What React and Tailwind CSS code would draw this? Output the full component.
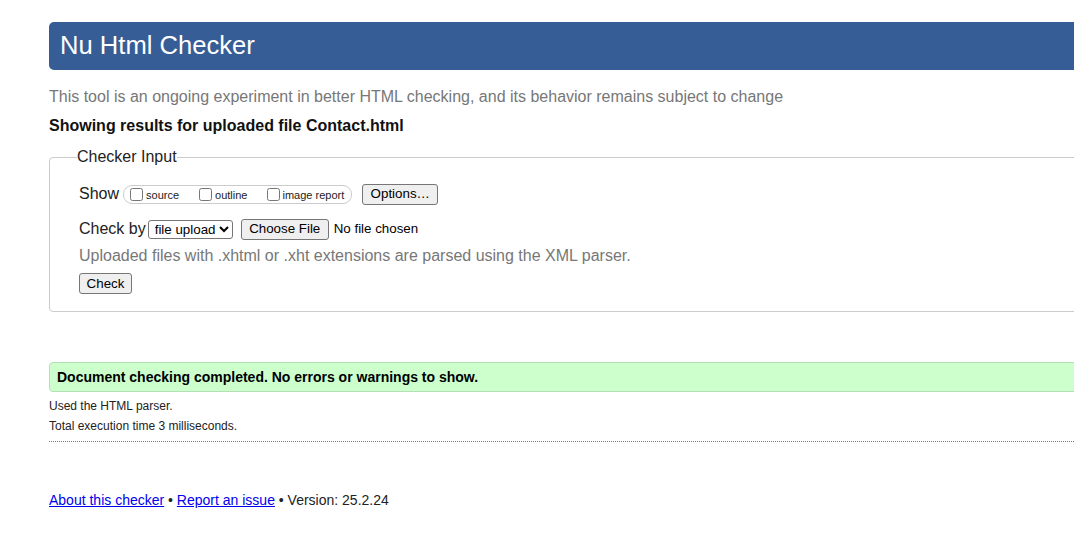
import { useState } from 'react'

function Btn({ children, className = '' }) {
  return (
    <button className={`h-[21px] px-[6px] bg-[#efefef] border border-[#767676] rounded-[3px] text-[13.33px] leading-none text-black ${className}`}>
      {children}
    </button>
  )
}

function Box({ label, last }) {
  const [on, setOn] = useState(false)
  return (
    <label className={`flex items-center ${last ? '' : 'mr-[20px]'}`}>
      <input type="checkbox" checked={on} onChange={() => setOn(!on)} className="m-0 w-[13px] h-[13px]" />
      <span className={`${last ? 'ml-[2px]' : 'ml-[3px]'} text-[11px] leading-none mt-[2px]`}>{label}</span>
    </label>
  )
}

export default function App() {
  return (
    <div className="w-full overflow-hidden bg-white font-['Liberation_Sans',Arial,sans-serif] text-[#222]">
      <div className="pt-[22px] pl-[49px] w-[1140px] pb-[40px]">
        {/* header */}
        <div className="h-[48px] bg-[#365d95] rounded-[5px] flex items-center pl-[11px]">
          <h1 className="text-white text-[25.6px] leading-none">Nu Html Checker</h1>
        </div>

        <p className="mt-[17px] h-[20px] leading-[20px] text-[16px] text-[#777]">
          This tool is an ongoing experiment in better HTML checking, and its behavior remains subject to change
        </p>
        <p className="mt-[9px] h-[20px] leading-[20px] text-[16px] font-bold text-[#111]">
          Showing results for uploaded file Contact.html
        </p>

        {/* checker input */}
        <fieldset className="mt-[12px] border border-[#ccc] rounded-[4px] pl-[27px] pb-[17px]">
          <legend className="px-0 text-[16px] leading-[18px] text-[#222]">Checker Input</legend>

          <div className="mt-[17px] h-[22px] flex items-center pl-[2px]">
            <span className="text-[16px]">Show</span>
            <span className="ml-[4px] h-[19px] flex items-center border border-[#ccc] rounded-[9px] pl-[6px] pr-[7px]">
              <Box label="source" />
              <Box label="outline" />
              <Box label="image report" last />
            </span>
            <Btn className="ml-[10px] w-[76px]">Options…</Btn>
          </div>

          <div className="mt-[13px] h-[22px] flex items-center pl-[2px]">
            <span className="text-[16px]">Check by</span>
            <select className="ml-[2px] h-[19px] w-[85px] border border-[#767676] rounded-[3px] text-[13.33px] text-black pl-[2px]">
              <option>file upload</option>
            </select>
            <Btn className="ml-[8px] w-[88px]">Choose File</Btn>
            <span className="ml-[5px] text-[13.33px] text-black">No file chosen</span>
          </div>

          <p className="mt-[6px] h-[20px] leading-[20px] pl-[2px] text-[16px] text-[#777]">
            Uploaded files with .xhtml or .xht extensions are parsed using the XML parser.
          </p>

          <div className="mt-[7px] pl-[2px] flex">
            <Btn className="w-[53px] h-[20px]">Check</Btn>
          </div>
        </fieldset>

        {/* result */}
        <div className="mt-[50px] h-[30px] flex items-center pl-[7px] bg-[#ccffcc] border border-[#b5dfb5] rounded-[4px]">
          <p className="text-[14px] font-bold text-black">Document checking completed. No errors or warnings to show.</p>
        </div>
        <p className="mt-[6px] h-[16px] leading-[16px] text-[12px] text-[#222]">Used the HTML parser.</p>
        <p className="mt-[4px] h-[16px] leading-[16px] text-[12px] text-[#222]">Total execution time 3 milliseconds.</p>
        <div className="mt-[7px] border-t border-dotted border-[#777]" />

        {/* footer */}
        <p className="mt-[49px] h-[18px] leading-[18px] text-[14px] text-[#222]">
          <a href="#" className="text-[#0000ee] underline">About this checker</a>
          {' • '}
          <a href="#" className="text-[#0000ee] underline">Report an issue</a>
          {' • Version: 25.2.24'}
        </p>
      </div>
    </div>
  )
}
